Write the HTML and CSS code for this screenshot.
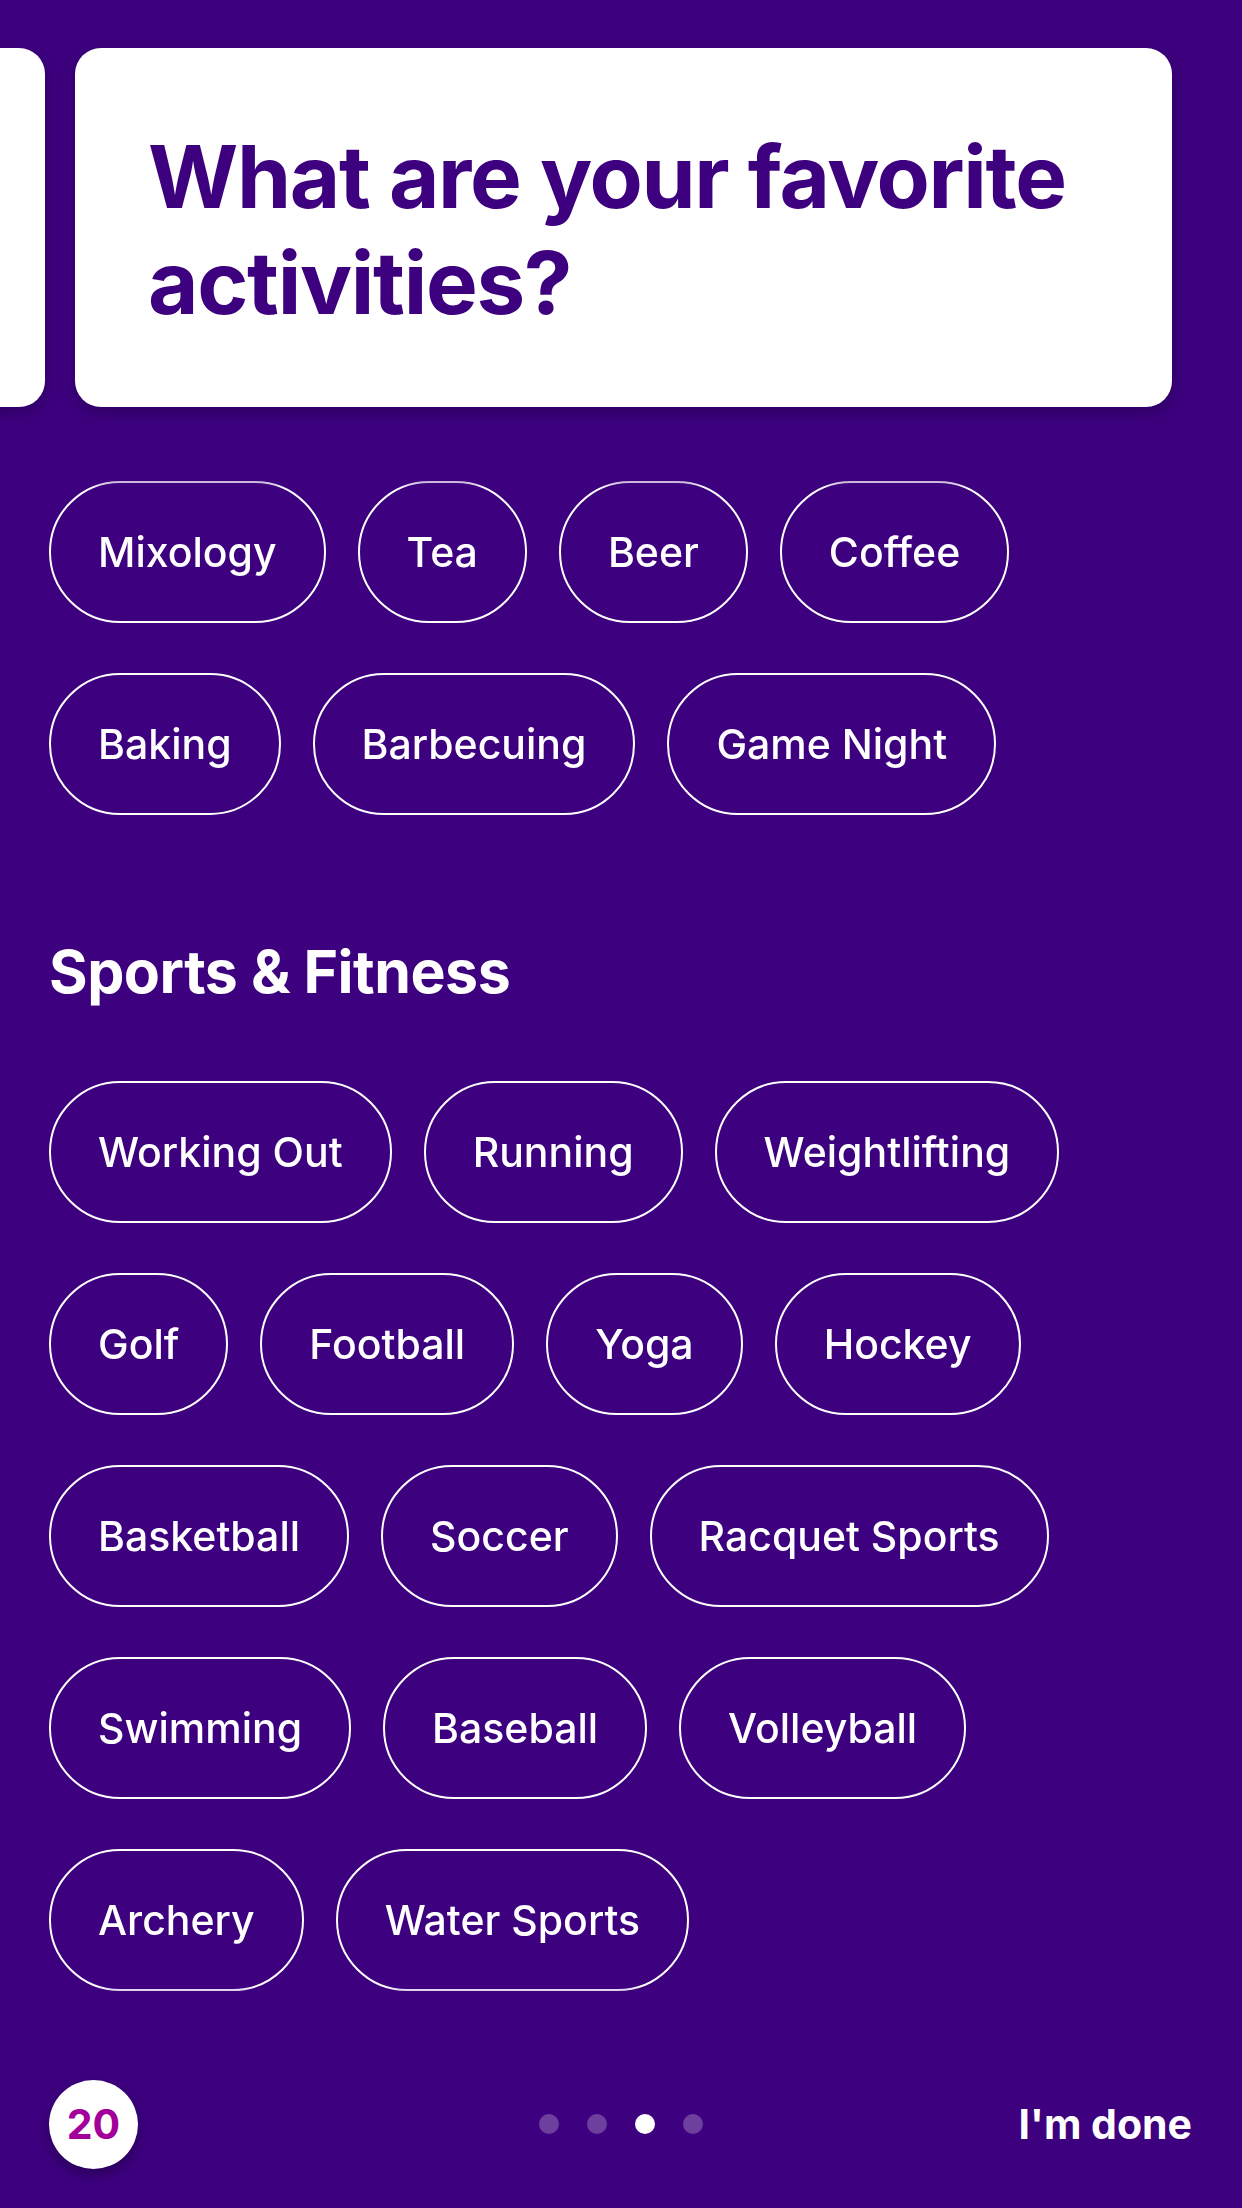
FILE: index.html
```html
<!DOCTYPE html>
<html lang="en">
<head>
<meta charset="utf-8">
<title>Favorite activities</title>
<link rel="stylesheet" href="styles.css">
</head>
<body>
<div class="screen">
  <div class="carousel">
    <div class="card card-prev"></div>
    <div class="card">
      <h1 class="card-title">What are your favorite<br>activities?</h1>
    </div>
  </div>

  <div class="scroll">
    <div class="chips">
      <span class="chip">Mixology</span>
      <span class="chip">Tea</span>
      <span class="chip">Beer</span>
      <span class="chip">Coffee</span>
      <span class="chip">Baking</span>
      <span class="chip">Barbecuing</span>
      <span class="chip">Game Night</span>
    </div>

    <h2 class="section-title">Sports &amp; Fitness</h2>

    <div class="chips">
      <span class="chip">Working Out</span>
      <span class="chip">Running</span>
      <span class="chip">Weightlifting</span>
      <span class="chip">Golf</span>
      <span class="chip">Football</span>
      <span class="chip">Yoga</span>
      <span class="chip">Hockey</span>
      <span class="chip">Basketball</span>
      <span class="chip">Soccer</span>
      <span class="chip">Racquet Sports</span>
      <span class="chip">Swimming</span>
      <span class="chip">Baseball</span>
      <span class="chip">Volleyball</span>
      <span class="chip">Archery</span>
      <span class="chip">Water Sports</span>
    </div>
  </div>

  <div class="footer">
    <div class="count">20</div>
    <div class="dots">
      <span class="dot"></span>
      <span class="dot"></span>
      <span class="dot dot-active"></span>
      <span class="dot"></span>
    </div>
    <div class="done">I'm done</div>
  </div>
</div>
</body>
</html>
```

FILE: styles.css
```css
* { box-sizing: border-box; }

html, body {
  margin: 0;
  padding: 0;
  background: #3d007e;
}

body {
  font-family: Inter, "Noto Sans", "Liberation Sans", sans-serif;
  color: #ffffff;
}

.screen {
  width: 1242px;
  height: 2208px;
  overflow: hidden;
  display: flex;
  flex-direction: column;
}

.carousel {
  display: flex;
  gap: 30px;
  padding-top: 48px;
  margin-left: -1052px;
  flex: none;
}

.card {
  flex: none;
  width: 1097px;
  height: 359px;
  background: #ffffff;
  border-radius: 26px;
  box-shadow: 0 6px 14px rgba(20, 0, 50, 0.35);
  padding: 76px 40px 0 73px;
}

.card-title {
  margin: 0;
  font-size: 87px;
  line-height: 106px;
  font-weight: 700;
  letter-spacing: -1.3px;
  color: #3d007e;
  white-space: nowrap;
}

.scroll {
  flex: 1;
  margin-top: 67px;
  padding: 7px 49px 0;
  -webkit-mask-image: linear-gradient(to bottom, rgba(0,0,0,0.35) 0, #000 14px, #000 calc(100% - 54px), rgba(0,0,0,0.35) calc(100% - 38px), transparent 100%);
  mask-image: linear-gradient(to bottom, rgba(0,0,0,0.35) 0, #000 14px, #000 calc(100% - 54px), rgba(0,0,0,0.35) calc(100% - 38px), transparent 100%);
}

.chips {
  display: flex;
  flex-wrap: wrap;
  gap: 50px 32px;
}

.chip {
  display: inline-flex;
  align-items: center;
  height: 142px;
  padding: 0 47px;
  border: 2px solid #ffffff;
  border-radius: 71px;
  font-size: 41px;
  font-weight: 500;
  white-space: nowrap;
}

.section-title {
  margin: 121px 0 73px;
  font-size: 59px;
  line-height: 72px;
  font-weight: 700;
  letter-spacing: -0.5px;
}

.footer {
  flex: none;
  height: 168px;
  display: flex;
  align-items: center;
  justify-content: space-between;
  padding: 0 50px 0 49px;
  position: relative;
}

.count {
  width: 89px;
  height: 89px;
  border-radius: 50%;
  background: #ffffff;
  color: #a4009a;
  font-size: 41px;
  font-weight: 700;
  display: flex;
  align-items: center;
  justify-content: center;
  box-shadow: 0 6px 12px rgba(20, 0, 50, 0.45);
}

.dots {
  position: absolute;
  left: 50%;
  top: 50%;
  transform: translate(-50%, -50%);
  display: flex;
  gap: 28px;
}

.dot {
  width: 20px;
  height: 20px;
  border-radius: 50%;
  background: rgba(255, 255, 255, 0.25);
}

.dot-active {
  background: #ffffff;
}

.done {
  font-size: 41px;
  font-weight: 700;
}
```
